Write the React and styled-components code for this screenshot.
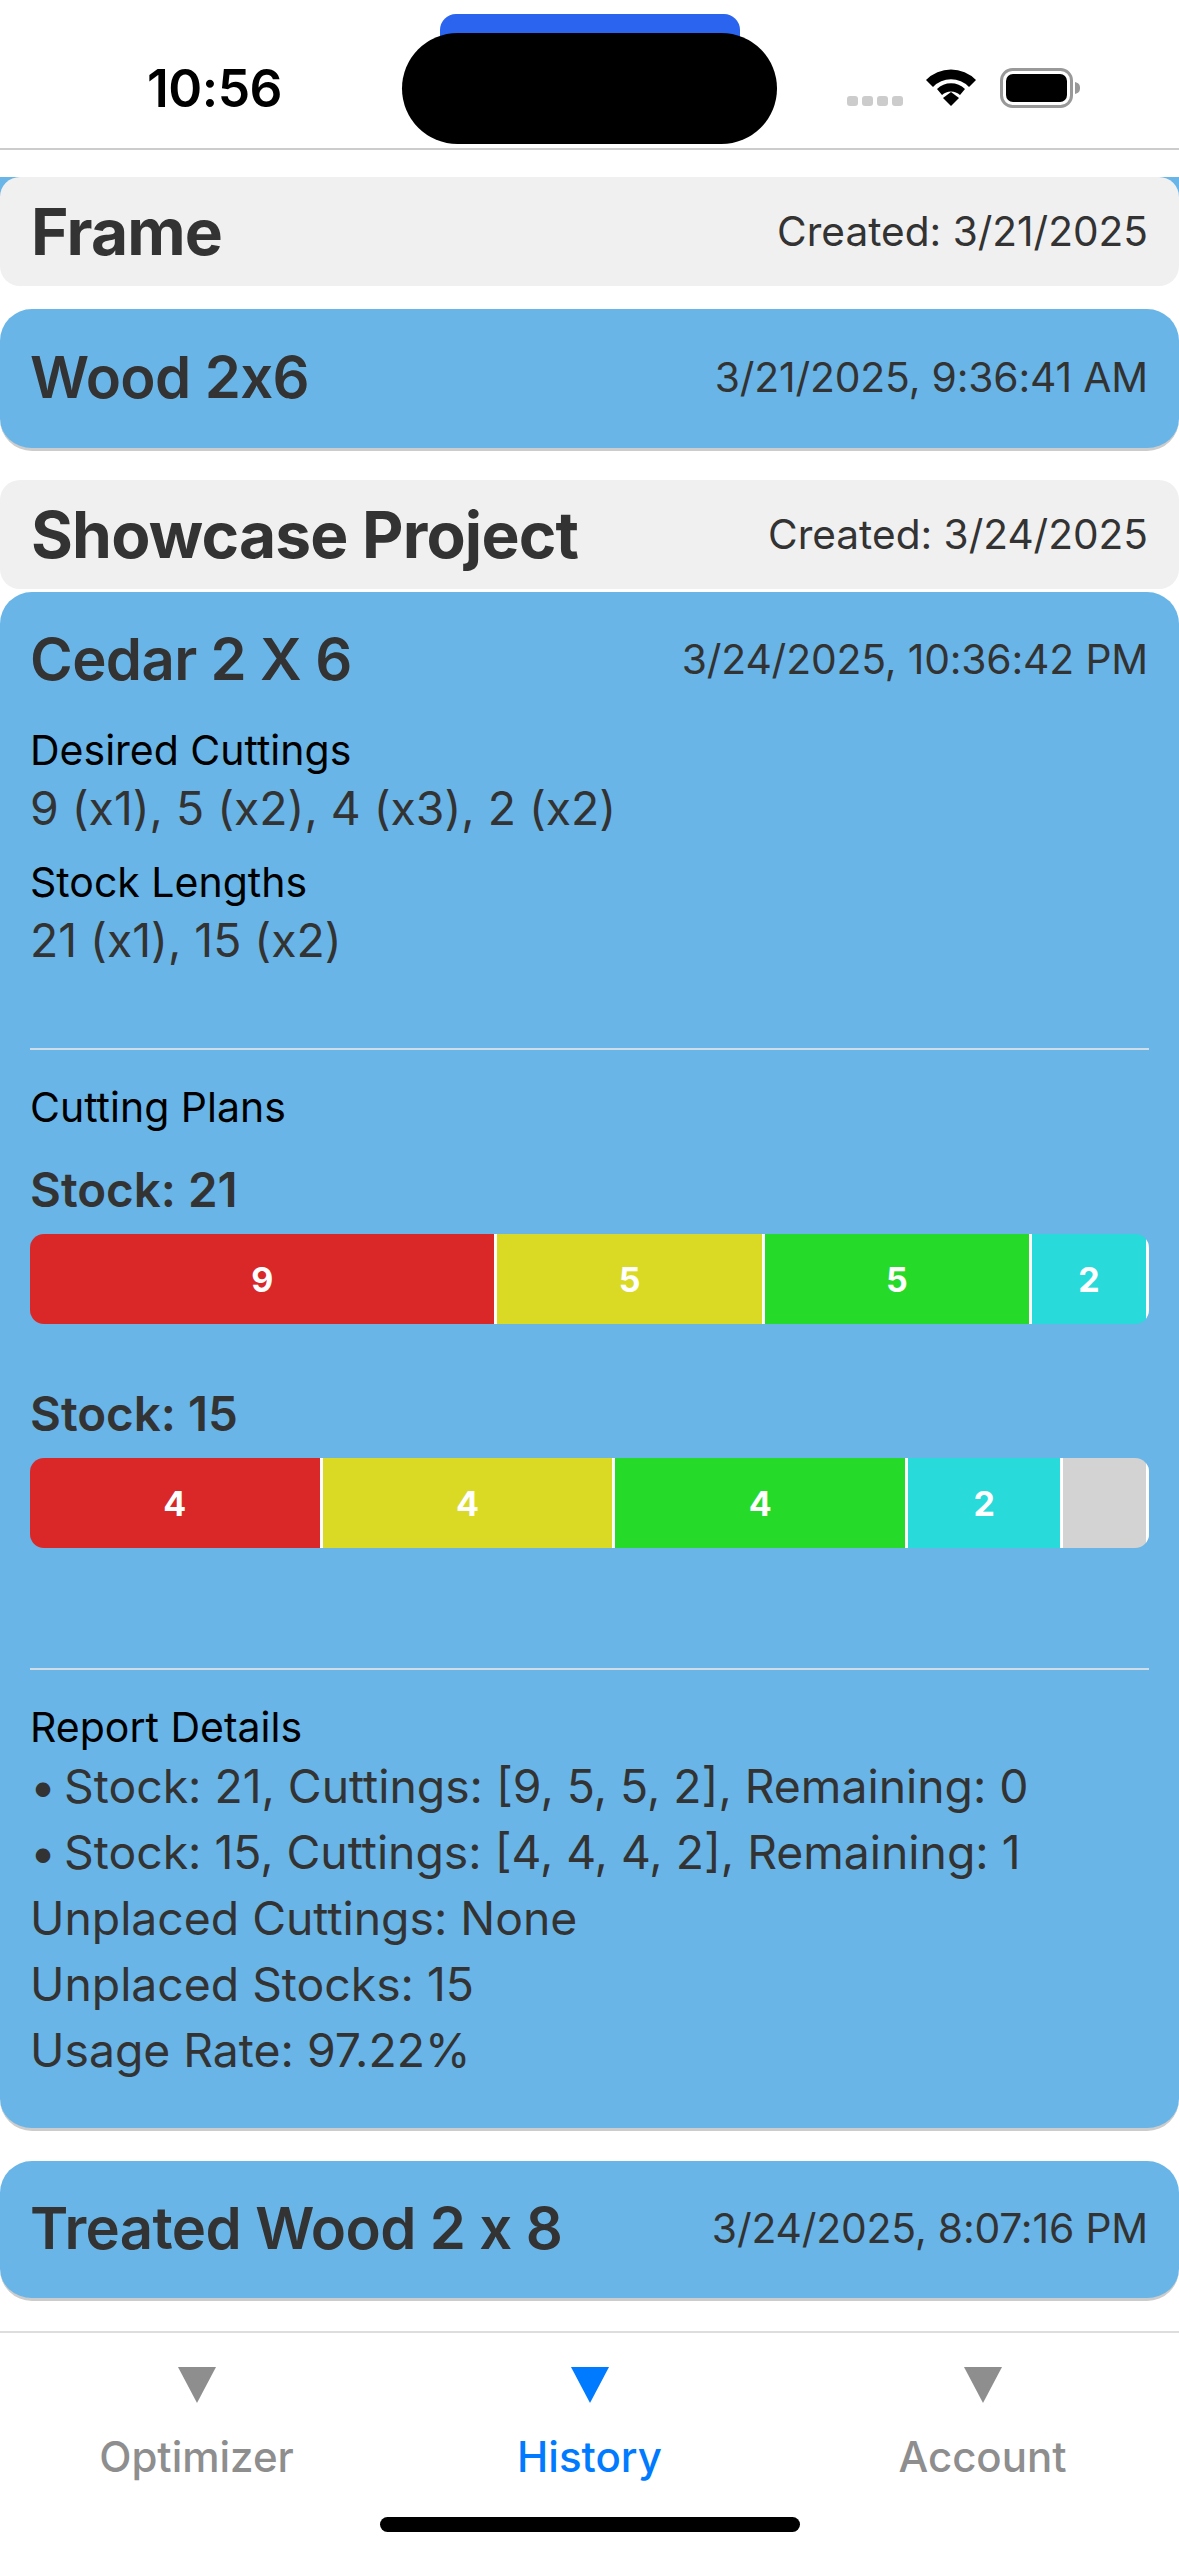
import React from "react";
import styled, { createGlobalStyle } from "styled-components";

const GlobalStyle = createGlobalStyle`
  html, body { margin: 0; padding: 0; background: #fff; }
  body { font-family: Inter, "Liberation Sans", sans-serif; }
`;

const BLUE = "#69b5e7";

const Screen = styled.div`
  position: relative;
  width: 1179px;
  height: 2556px;
  display: flex;
  flex-direction: column;
  overflow: hidden;
  background: #fff;
`;

const StatusBar = styled.header`
  box-sizing: border-box;
  height: 150px;
  flex: none;
  border-bottom: 2px solid #ccc;
  display: flex;
  align-items: flex-start;
  justify-content: space-between;
  padding: 60px 97px 0 147px;
`;

const Time = styled.span`
  font-size: 51.5px;
  line-height: 56px;
  font-weight: 600;
  letter-spacing: -0.5px;
  color: #000;
`;

const StatusIcons = styled.div`
  display: flex;
  align-items: flex-start;
  padding-top: 8px;
`;

const SignalDots = styled.div`
  display: flex;
  gap: 4px;
  margin: 28px 22px 0 0;
`;

const SignalDot = styled.i`
  width: 11px;
  height: 10px;
  border-radius: 3px;
  background: #ccc;
`;

const BlueTab = styled.div`
  position: absolute;
  top: 14px;
  left: 440px;
  width: 300px;
  height: 30px;
  border-radius: 16px 16px 0 0;
  background: #2b65ef;
`;

const Island = styled.div`
  position: absolute;
  top: 33px;
  left: 402px;
  width: 375px;
  height: 111px;
  border-radius: 56px;
  background: #000;
`;

const List = styled.main`
  flex: 1;
  min-height: 0;
  overflow: hidden;
  padding-top: 27px;
  display: flex;
  flex-direction: column;
`;

const SectionHeader = styled.div`
  box-sizing: border-box;
  height: 109px;
  margin-top: ${(p) => p.$top || 0}px;
  padding: 0 31px;
  display: flex;
  align-items: center;
  justify-content: space-between;
  background: #f0f0f0;
  border-radius: 20px;
  flex: none;
`;

const Corners = styled.div`
  flex: none;
  background: linear-gradient(${BLUE} 20px, transparent 20px);
`;

const SectionTitle = styled.h2`
  margin: 0;
  font-size: 64px;
  line-height: 72px;
  font-weight: 700;
  letter-spacing: -0.8px;
  color: #333;
`;

const Created = styled.span`
  font-size: 40.6px;
  line-height: 48px;
  color: #333;
`;

const Card = styled.section`
  box-sizing: border-box;
  flex: none;
  margin-top: ${(p) => p.$top || 0}px;
  padding-bottom: ${(p) => p.$bottom || 0}px;
  background: ${BLUE};
  border-radius: 32px;
  border-bottom: 3px solid #ccc;
`;

const CardHead = styled.div`
  box-sizing: border-box;
  display: flex;
  align-items: center;
  justify-content: space-between;
  padding: 0 31px ${(p) => p.$lift || 0}px 30px;
  height: ${(p) => p.$height}px;
`;

const CardTitle = styled.h3`
  margin: 0;
  font-size: 58px;
  line-height: 70px;
  font-weight: 600;
  letter-spacing: -0.6px;
  color: #333;
`;

const Stamp = styled.span`
  font-size: 40.8px;
  line-height: 48px;
  letter-spacing: -0.15px;
  color: #333;
`;

const Details = styled.div`
  padding: 0 30px;
`;

const Label = styled.div`
  font-size: 41px;
  line-height: 50px;
  color: #000;
  margin-top: ${(p) => p.$top || 0}px;
  margin-bottom: ${(p) => p.$bottom || 0}px;
`;

const Value = styled.div`
  font-size: 46.3px;
  line-height: 66px;
  color: #333;
`;

const Bullet = styled.span`
  margin-right: -5px;
`;

const Divider = styled.hr`
  margin: ${(p) => p.$top}px 0 0;
  border: 0;
  height: 2px;
  background: #cfdde8;
`;

const StockTitle = styled.div`
  font-size: 47.5px;
  line-height: 56px;
  font-weight: 600;
  color: #333;
  margin-top: ${(p) => p.$top}px;
`;

const Bar = styled.div`
  height: 90px;
  margin-top: 16px;
  display: flex;
  border-radius: 14px;
  overflow: hidden;
`;

const Segment = styled.div`
  box-sizing: border-box;
  flex: ${(p) => p.$length} ${(p) => p.$length} 17px;
  border-right: 3px solid #fff;
  display: flex;
  align-items: center;
  justify-content: center;
  background: ${(p) => p.$color};
  color: #fff;
  font-size: 34px;
  font-weight: 700;
`;

const TabBar = styled.nav`
  box-sizing: border-box;
  position: relative;
  height: 225px;
  flex: none;
  border-top: 2px solid #ddd;
  display: grid;
  grid-template-columns: repeat(3, 1fr);
  padding: 34px 0 0;
  background: #fff;
`;

const Tab = styled.div`
  display: flex;
  flex-direction: column;
  align-items: center;
  color: ${(p) => (p.$active ? "#007aff" : "#8e8e8f")};
`;

const TabLabel = styled.span`
  font-size: 42px;
  line-height: 50px;
  font-weight: 500;
  margin-top: 29px;
`;

const HomeBar = styled.div`
  position: absolute;
  left: 380px;
  bottom: 24px;
  width: 420px;
  height: 15px;
  border-radius: 8px;
  background: #000;
`;

const Wifi = () => (
  <svg width="52" height="38" viewBox="0 0 52 38">
    <path d="M26 24 L18 30 L26 38 L34 30 Z" fill="#000" />
    <path d="M12 21 A20 20 0 0 1 40 21 L35 27 A13 13 0 0 0 17 27 Z" fill="#000" />
    <path d="M1 12 A35 35 0 0 1 51 12 L44 19 A25 25 0 0 0 8 19 Z" fill="#000" />
  </svg>
);

const Battery = () => (
  <svg width="82" height="40" viewBox="0 0 82 40" style={{ marginLeft: 23 }}>
    <rect x="1.5" y="1.5" width="70" height="37" rx="11" fill="none" stroke="#999" strokeWidth="3" />
    <rect x="6" y="6" width="61" height="28" rx="7" fill="#000" />
    <path d="M75 14 C79 15 80 17 80 20 C80 23 79 25 75 26 Z" fill="#999" />
  </svg>
);

const TabArrow = () => (
  <svg width="38" height="36" viewBox="0 0 38 36">
    <path d="M0 0 H38 L19 36 Z" fill="currentColor" />
  </svg>
);

const COLORS = ["#da2828", "#dada25", "#25da28", "#28dada", "#d3d3d3"];

const CuttingBar = ({ cuts, rest }) => (
  <Bar>
    {cuts.map((n, i) => (
      <Segment key={i} $length={n} $color={COLORS[i]}>{n}</Segment>
    ))}
    {rest ? <Segment $length={rest} $color={COLORS[4]} /> : null}
  </Bar>
);

const TABS = ["Optimizer", "History", "Account"];

export default function App() {
  return (
    <Screen>
      <GlobalStyle />
      <StatusBar>
        <Time>10:56</Time>
        <StatusIcons>
          <SignalDots>
            <SignalDot />
            <SignalDot />
            <SignalDot />
            <SignalDot />
          </SignalDots>
          <Wifi />
          <Battery />
        </StatusIcons>
      </StatusBar>
      <BlueTab />
      <Island />

      <List>
        <Corners>
          <SectionHeader>
            <SectionTitle>Frame</SectionTitle>
            <Created>Created: 3/21/2025</Created>
          </SectionHeader>
        </Corners>
        <Card $top={23}>
          <CardHead $height={139} $lift={4}>
            <CardTitle>Wood 2x6</CardTitle>
            <Stamp>3/21/2025, 9:36:41 AM</Stamp>
          </CardHead>
        </Card>

        <SectionHeader $top={29}>
          <SectionTitle>Showcase Project</SectionTitle>
          <Created>Created: 3/24/2025</Created>
        </SectionHeader>

        <Card $top={3} $bottom={45}>
          <CardHead $height={133}>
            <CardTitle>Cedar 2 X 6</CardTitle>
            <Stamp>3/24/2025, 10:36:42 PM</Stamp>
          </CardHead>
          <Details>
            <Label>Desired Cuttings</Label>
            <Value>9 (x1), 5 (x2), 4 (x3), 2 (x2)</Value>
            <Label $top={16}>Stock Lengths</Label>
            <Value>21 (x1), 15 (x2)</Value>
            <Divider $top={75} />
            <Label $top={32}>Cutting Plans</Label>
            <StockTitle $top={30}>Stock: 21</StockTitle>
            <CuttingBar cuts={[9, 5, 5, 2]} />
            <StockTitle $top={62}>Stock: 15</StockTitle>
            <CuttingBar cuts={[4, 4, 4, 2]} rest={1} />
            <Divider $top={120} />
            <Label $top={32} $bottom={1}>Report Details</Label>
            <Value><Bullet>•</Bullet> Stock: 21, Cuttings: [9, 5, 5, 2], Remaining: 0</Value>
            <Value><Bullet>•</Bullet> Stock: 15, Cuttings: [4, 4, 4, 2], Remaining: 1</Value>
            <Value>Unplaced Cuttings: None</Value>
            <Value>Unplaced Stocks: 15</Value>
            <Value>Usage Rate: 97.22%</Value>
          </Details>
        </Card>

        <Card $top={30}>
          <CardHead $height={137} $lift={4}>
            <CardTitle>Treated Wood 2 x 8</CardTitle>
            <Stamp>3/24/2025, 8:07:16 PM</Stamp>
          </CardHead>
        </Card>
      </List>

      <TabBar>
        {TABS.map((name) => (
          <Tab key={name} $active={name === "History"}>
            <TabArrow />
            <TabLabel>{name}</TabLabel>
          </Tab>
        ))}
        <HomeBar />
      </TabBar>
    </Screen>
  );
}
